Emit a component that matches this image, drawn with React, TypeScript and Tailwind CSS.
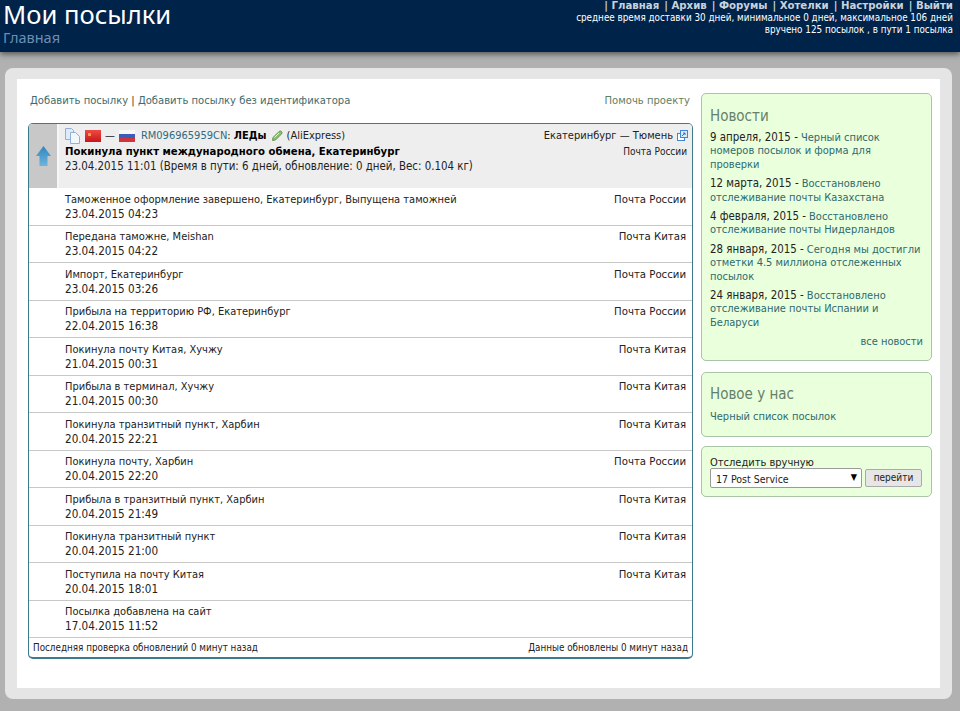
const events = [
  ["Таможенное оформление завершено, Екатеринбург, Выпущена таможней", "23.04.2015 04:23", "Почта России"],
  ["Передана таможне, Meishan", "23.04.2015 04:22", "Почта Китая"],
  ["Импорт, Екатеринбург", "23.04.2015 03:26", "Почта России"],
  ["Прибыла на территорию РФ, Екатеринбург", "22.04.2015 16:38", "Почта России"],
  ["Покинула почту Китая, Хучжу", "21.04.2015 00:31", "Почта Китая"],
  ["Прибыла в терминал, Хучжу", "21.04.2015 00:30", "Почта Китая"],
  ["Покинула транзитный пункт, Харбин", "20.04.2015 22:21", "Почта Китая"],
  ["Покинула почту, Харбин", "20.04.2015 22:20", "Почта России"],
  ["Прибыла в транзитный пункт, Харбин", "20.04.2015 21:49", "Почта Китая"],
  ["Покинула транзитный пункт", "20.04.2015 21:00", "Почта Китая"],
  ["Поступила на почту Китая", "20.04.2015 18:01", "Почта Китая"],
  ["Посылка добавлена на сайт", "17.04.2015 11:52", ""],
];

const news = [
  ["9 апреля, 2015", "Черный список номеров посылок и форма для проверки"],
  ["12 марта, 2015", "Восстановлено отслеживание почты Казахстана"],
  ["4 февраля, 2015", "Восстановлено отслеживание почты Нидерландов"],
  ["28 января, 2015", "Сегодня мы достигли отметки 4.5 миллиона отслеженных посылок"],
  ["24 января, 2015", "Восстановлено отслеживание почты Испании и Беларуси"],
];

const nav = ["Главная", "Архив", "Форумы", "Хотелки", "Настройки", "Выйти"];

function CopyIcon() {
  return (
    <svg width="16" height="16" viewBox="0 0 16 16" className="shrink-0">
      <path d="M.5.5h6l2 2v9h-8z" fill="#dfeafa" stroke="#8fb0d8" />
      <path d="M5.5 4.5h5l4 4v7h-9z" fill="#f2f7fd" stroke="#8fb0d8" />
    </svg>
  );
}

function ChinaFlag() {
  return (
    <svg width="16" height="12" viewBox="0 0 16 12" className="shrink-0">
      <defs>
        <linearGradient id="chinaFill" x1="0" y1="0" x2="0" y2="1">
          <stop offset="0" stopColor="#ee4a45" />
          <stop offset="1" stopColor="#c9161a" />
        </linearGradient>
      </defs>
      <rect width="16" height="12" fill="url(#chinaFill)" />
      <rect x="3" y="3" width="3" height="3" fill="#e8a040" />
    </svg>
  );
}

function RussiaFlag() {
  return (
    <svg width="16" height="12" viewBox="0 0 16 12" className="shrink-0">
      <rect width="16" height="4" fill="#f8f8f8" />
      <rect y="4" width="16" height="4" fill="#3a5fb8" />
      <rect y="8" width="16" height="4" fill="#d2343c" />
    </svg>
  );
}

function PencilIcon() {
  return (
    <svg width="12" height="12" viewBox="0 0 12 12" className="shrink-0">
      <path d="M1.5 10.5 2 7.5 8 1.5a1.5 1.5 0 0 1 2.5 2.5l-6 6z" fill="#8cc070" stroke="#55853f" strokeWidth="0.8" />
      <path d="M3.5 7.5 8 3" stroke="#e4f4d8" strokeWidth="1" />
    </svg>
  );
}

function OpenIcon() {
  return (
    <svg width="11" height="11" viewBox="0 0 11 11" className="shrink-0">
      <rect x="0.5" y="3.5" width="7" height="7" fill="#fff" stroke="#3f86d4" />
      <rect x="3.5" y="0.5" width="7" height="7" fill="#dbe9f8" stroke="#3f86d4" />
      <path d="M5 6l3-3M6 3h2v2" fill="none" stroke="#2f70c0" />
    </svg>
  );
}

function UpArrow() {
  return (
    <svg width="15" height="20" viewBox="0 0 15 20">
      <defs>
        <linearGradient id="arrowFill" x1="0" y1="0" x2="0" y2="1">
          <stop offset="0" stopColor="#2f86c0" />
          <stop offset="1" stopColor="#6fb4dc" />
        </linearGradient>
      </defs>
      <path d="M7.5 0 15 10h-3.5v10h-8V10H0z" fill="url(#arrowFill)" />
    </svg>
  );
}

export default function App() {
  return (
    <div className="h-[711px] overflow-hidden bg-[#b1b1b1] font-['DejaVu_Sans_Condensed',sans-serif] text-[11px] text-[#222]">
      <header className="flex h-[52px] justify-between bg-[#00234a] pl-[3px] pr-[7px] text-white shadow-[0_2px_6px_rgba(0,0,0,0.55)]">
        <div className="font-['Noto_Sans',sans-serif]">
          <div className="mt-[-3px] text-[25.6px] leading-[36px] text-white">Мои посылки</div>
          <div className="mt-[-6px] text-[14.5px] leading-[20px] text-[#6a8fb5]">Главная</div>
        </div>
        <div className="text-right">
          <div className="mt-[-2px] flex justify-end gap-[5px] text-[11.3px] font-bold leading-[16px] text-[#c9d2dc]">
            {nav.map((item) => (
              <span key={item}>| {item}</span>
            ))}
          </div>
          <div className="mt-[-2px] text-[9.8px] leading-[12px]">
            среднее время доставки 30 дней, минимальное 0 дней, максимальное 106 дней
          </div>
          <div className="text-[9.8px] leading-[12px]">вручено 125 посылок , в пути 1 посылка</div>
        </div>
      </header>

      <div className="mx-[5px] mt-[16px] h-[631px] w-[947px] rounded-[8px] bg-[#e5e5e5] px-[12px] py-[11px]">
        <div className="flex h-[609px] bg-white pl-[11px] pr-[9px] pt-[14px]">
          <main className="w-[665px] shrink-0">
            <div className="flex h-[16px] items-center justify-between pl-[2px] pr-[3px] text-[11.15px] leading-[16px] text-[#3f6b6b]">
              <div>
                Добавить посылку <span className="text-[#333]">|</span> Добавить посылку без идентификатора
              </div>
              <div className="text-[#5f7f5f]">Помочь проекту</div>
            </div>

            <div className="mt-[14px] overflow-hidden rounded-[5px] border border-b-2 border-[#3d7a8c]">
              <div className="flex h-[64px] bg-[#eeeeee]">
                <div className="flex w-[30px] shrink-0 items-center justify-center border-r-2 border-[#f6f6f6] bg-[#c8c8c8]">
                  <UpArrow />
                </div>
                <div className="flex-1 pl-[6px] pr-[4px] pt-[3.5px] leading-[15px]">
                  <div className="flex justify-between">
                    <div className="flex items-center gap-[4px]">
                      <CopyIcon />
                      <ChinaFlag />
                      <span>—</span>
                      <RussiaFlag />
                      <span className="ml-[2px]">
                        <span className="text-[#2f6a80]">RM096965959CN</span>: <b className="text-black">ЛЕДы</b>
                      </span>
                      <PencilIcon />
                      <span>(AliExpress)</span>
                    </div>
                    <div className="flex items-center gap-[4px]">
                      <span>Екатеринбург — Тюмень</span>
                      <OpenIcon />
                    </div>
                  </div>
                  <div className="flex justify-between">
                    <div className="text-[11.25px] font-bold text-black">Покинула пункт международного обмена, Екатеринбург</div>
                    <div className="pr-[1px] text-[10px]">Почта России</div>
                  </div>
                  <div className="text-[11.4px]">23.04.2015 11:01 (Время в пути: 6 дней, обновление: 0 дней, Вес: 0.104 кг)</div>
                </div>
              </div>

              {events.map(([title, date, carrier]) => (
                <div
                  key={title}
                  className="flex h-[37.5px] justify-between border-b border-[#c8c8c8] pl-[36px] pr-[6px] pt-[3.5px] leading-[15px]"
                >
                  <div>
                    <div>{title}</div>
                    <div className="text-[11.6px]">{date}</div>
                  </div>
                  <div className="text-[11.3px]">{carrier}</div>
                </div>
              ))}

              <div className="flex h-[19px] items-center justify-between px-[4px] pt-[1px] text-[9.8px]">
                <span>Последняя проверка обновлений 0 минут назад</span>
                <span>Данные обновлены 0 минут назад</span>
              </div>
            </div>
          </main>

          <aside className="ml-[8px] w-[231px] shrink-0 text-[#222]">
            <section className="h-[268px] rounded-[5px] border border-[#a9c4a6] bg-[#eaffdc] px-[8px] pt-[12px]">
              <h2 className="text-[15px] leading-[20px] text-[#66806a]">Новости</h2>
              <div className="mt-[5px] flex flex-col gap-[6px] leading-[13.4px]">
                {news.map(([date, text]) => (
                  <p key={date}>
                    <span className="text-[11.4px]">{date} -</span> <span className="text-[#2f6a70]">{text}</span>
                  </p>
                ))}
              </div>
              <div className="mt-[5px] text-right text-[#2f6a70]">все новости</div>
            </section>

            <section className="mt-[11px] h-[65px] rounded-[5px] border border-[#a9c4a6] bg-[#eaffdc] px-[8px] pt-[11px]">
              <h2 className="text-[15px] leading-[20px] text-[#66806a]">Новое у нас</h2>
              <div className="mt-[6px] leading-[14px] text-[#2f6a70]">Черный список посылок</div>
            </section>

            <section className="mt-[9px] h-[51px] rounded-[5px] border border-[#a9c4a6] bg-[#eaffdc] px-[8px] pt-[9px]">
              <div className="mb-[-1px] leading-[13px]">Отследить вручную</div>
              <div className="flex items-center gap-[3px]">
                <div className="flex h-[20px] w-[152px] items-center justify-between rounded-[2px] border border-[#9a9a9a] bg-white pl-[5px] pr-[4px] pt-[3px] text-[10.5px]">
                  <span>17 Post Service</span>
                  <span className="mt-[-3px] text-[9px] text-black">▼</span>
                </div>
                <button className="h-[18px] w-[57px] rounded-[2px] border border-[#aaaaaa] bg-[#e6e6e6] text-[10px] leading-[14px]" type="button">
                  перейти
                </button>
              </div>
            </section>
          </aside>
        </div>
      </div>
    </div>
  );
}
